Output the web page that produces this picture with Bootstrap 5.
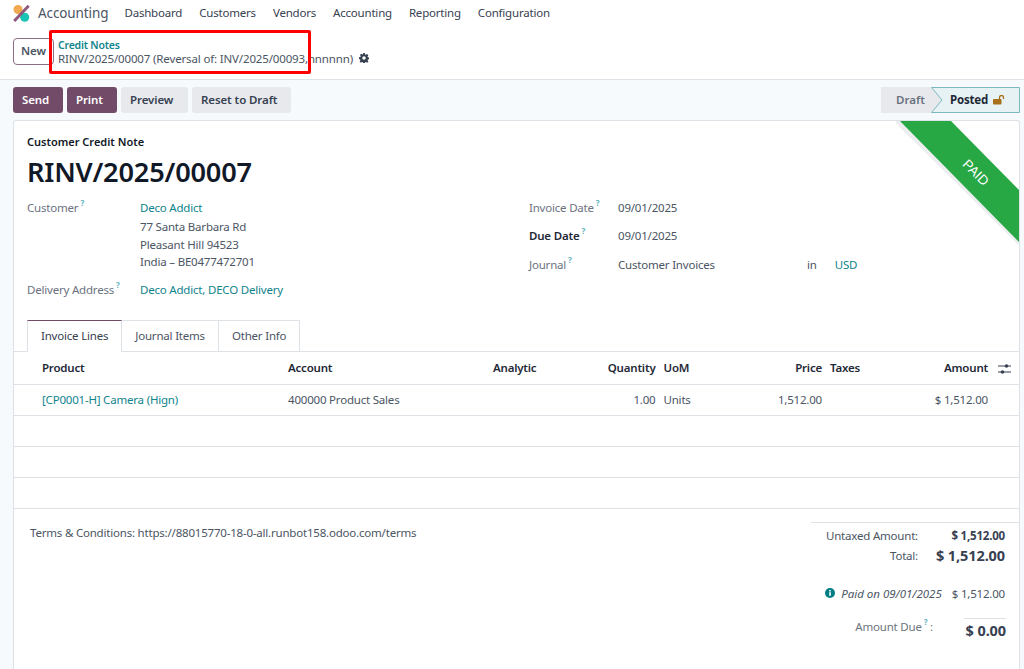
<!DOCTYPE html>
<html lang="en">
<head>
<meta charset="utf-8">
<title>Credit Note</title>
<link href="https://cdn.jsdelivr.net/npm/bootstrap@5.3.0/dist/css/bootstrap.min.css" rel="stylesheet">
<style>
html,body{height:669px;overflow:hidden}
body{font-family:"Noto Sans","Liberation Sans",sans-serif;font-size:11.5px;color:#4b5563;background:#fff;letter-spacing:-.2px}
.topbar{height:26px;padding-left:13px;color:#374151}
.topbar .brand{font-size:13.5px;margin:0 16px 0 8px;color:#4b5563;letter-spacing:-.1px}
.topbar .item{margin-right:17px;color:#374151}
.ctrl{height:54px;border-bottom:1px solid #dee2e6;padding-left:13px;position:relative}
.newbtn{height:27px;width:41px;border:1px solid #8d6f85;border-radius:4px;background:#fff;color:#4b5563;font-weight:600;font-size:11.5px;padding:0;margin-top:-3px}
.crumb{margin-left:4px;line-height:13px;margin-bottom:2px}
.teal{color:#11848c}
.crumb .teal{font-weight:600;font-size:10.5px}
.redbox{position:absolute;left:49px;top:4px;width:262px;height:44px;border:3px solid #f00;border-radius:2px;pointer-events:none}
.crumbline{font-size:11.5px;white-space:nowrap;letter-spacing:-.15px}
.gear{margin-left:6px}
.bar{height:40px;background:#f6fafc;padding:7px 4px 0 13px;gap:4px}
.act{height:26px;border:0;border-radius:3px;font-size:11.5px;font-weight:600;padding:0 0 0 9px;background:#e7e9ed;color:#374151;letter-spacing:-.1px;text-align:left}
.act.pri{background:#714b67;color:#fff}
.w50{width:50px}.w67{width:67px}.w99{width:99px}
.draft{height:26px;width:50px;background:#e7e9ed;color:#6b7280;font-weight:600;line-height:26px;padding-left:15px;letter-spacing:0}
.stage-wrap{position:relative;width:89px;height:26px;background:#e7e9ed}
.stage-wrap>svg{position:absolute;left:0;top:0}
.posted{position:relative;height:26px;line-height:26px;padding-left:19px;color:#1f2937;font-weight:700;gap:5px}
.pagebg{background:#f6fafc;padding:0 4px 0 13px;height:549px}
.sheet{position:relative;background:#fff;border:1px solid #dee2e6;border-bottom:0;border-radius:3px 3px 0 0;height:549px;overflow:hidden}
.ribbon{position:absolute;right:-1px;top:-1px;width:124px;height:124px}
.paidtxt{position:absolute;right:28px;top:42px;color:#fff;font-size:13.5px;transform:rotate(45deg);font-family:"Liberation Sans",sans-serif;letter-spacing:0}
.subt{font-weight:600;color:#111827;font-size:11px;padding:13px 0 0 13px;line-height:16px;letter-spacing:0}
.docname{font-size:27.2px;font-weight:600;color:#111827;line-height:34px;padding:5px 0 0 13px;letter-spacing:-.2px}
.cols{padding:10px 0 0 13px}
.lcol{width:502px}
.lbl{color:#6b7280;width:113px;flex:none}
.lbl.l2{width:89px}
.lbl.strong{color:#1f2937;font-weight:600}
sup.hlp{color:#5fb3c0;font-size:8px;font-weight:700;top:-.7em;margin-left:2px}
.frow{line-height:17.5px}
.firstline{margin-bottom:1.500px}
.gap10{margin-top:10px}
.gap12{margin-top:12px}
.jn{width:189px}
.usd{margin-left:18px}
.tabsrow{margin-top:22px;height:32px;border-bottom:1px solid #dee2e6;padding-left:13px}
.tabi{height:32px;line-height:30px;padding:0 13px;border:1px solid #dee2e6;border-left:0;border-bottom:0;color:#4b5563}
.tabi.on{background:#fff;height:32px;border-left:1px solid #dee2e6;border-top:1px solid #714b67;color:#374151;padding:0 13px}
table.lines{table-layout:fixed;width:1005px;margin:0;border-collapse:collapse;color:#4b5563;font-size:11.5px}
table.lines th,table.lines td{padding:0 4px;height:31px;vertical-align:middle;border-bottom:1px solid #dee2e6;background:transparent;color:inherit;white-space:nowrap}
table.lines td.teal{color:#11848c}
table.lines thead th{height:32px;color:#1f2937;font-weight:600;border-bottom-width:1px}
table.lines thead th.opt{padding-left:6px;padding-right:0}
.c0{width:24px}.c1{width:246px}.c2{width:205px}.c3{width:82px}.c4{width:88.500px}.c5{width:52px}.c6{width:114.500px}.c7{width:52px}.c8{width:114px}.c9{width:27px}
.foot{padding:13px 0 0 16px}
.terms{color:#4b5563;flex:1;padding-top:2px}
.totals{width:208px;border-top:1px solid #dee2e6;padding-right:14px;color:#4b5563}
.r1{padding-top:4px}
.r2{margin-top:1px}
.tk{flex:1;text-align:right}
.tv{text-align:right;font-weight:700;color:#374151;white-space:nowrap}
.vw{width:87px;flex:none}
.big{font-size:14.5px;letter-spacing:-.1px}
.paidrow{margin-top:18px;line-height:17px;white-space:nowrap}
.paidrow em{letter-spacing:0}
.gapv{margin:0 10px 0 6px}
.gapd{margin-right:31px}
.dueline{width:42px;border-top:1px solid #dee2e6;margin-right:-1px;padding-top:1px;line-height:20px}
</style>
</head>
<body>
<div class="topbar d-flex align-items-center">
  <svg width="17" height="17" viewBox="0 0 17 17" aria-hidden="true"><circle cx="5" cy="4.500" r="4.500" fill="#f0a94e"/><circle cx="11.700" cy="12.300" r="4.500" fill="#1ac4b4"/><path d="M1.200 16 15.700 .8" stroke="#8f5a7e" stroke-width="3"/></svg>
  <span class="brand">Accounting</span>
  <span class="item">Dashboard</span><span class="item">Customers</span><span class="item">Vendors</span><span class="item">Accounting</span><span class="item">Reporting</span><span class="item">Configuration</span>
</div>
<div class="ctrl d-flex align-items-center">
  <button class="newbtn" type="button">New</button>
  <div class="crumb">
    <div class="teal">Credit Notes</div>
    <div class="crumbline d-flex align-items-center">RINV/2025/00007 (Reversal of: INV/2025/00093,nnnnnn)
      <svg class="gear" width="10" height="10" viewBox="0 0 16 16" aria-hidden="true"><path fill="#374151" fill-rule="evenodd" d="M6.600 0h2.800l.4 2.200 1.300.6 1.900-1.300 2 2-1.300 1.900.6 1.300 2.200.4v2.800l-2.200.4-.6 1.300 1.300 1.900-2 2-1.900-1.300-1.300.6-.4 2.200H6.600l-.4-2.200-1.300-.6-1.900 1.300-2-2 1.300-1.900-.6-1.300L0 9.400V6.600l2.200-.4.6-1.300L1.500 3l2-2 1.900 1.300 1.300-.6zM8 5.200a2.800 2.800 0 1 0 0 5.600 2.800 2.800 0 0 0 0-5.600z"/></svg>
    </div>
  </div>
  <div class="redbox"></div>
</div>
<div class="bar d-flex">
  <button class="act pri w50" type="button">Send</button>
  <button class="act pri w50" type="button">Print</button>
  <button class="act w67" type="button">Preview</button>
  <button class="act w99" type="button">Reset to Draft</button>
  <div class="ms-auto d-flex">
    <div class="draft">Draft</div>
    <div class="stage-wrap">
      <svg width="89" height="26" viewBox="0 0 89 26" aria-hidden="true"><path d="M.5.500H88.500V25.500H.500L11 13z" fill="#e6f2f3" stroke="#7fb9c0"/></svg>
      <div class="posted d-flex align-items-center">Posted
        <svg width="12" height="10" viewBox="0 0 12 10" aria-hidden="true"><rect x="0" y="4" width="8.500" height="5.500" rx="1" fill="#a9701c"/><path d="M6.500 4V2.500a2 2 0 0 1 4 0V4" fill="none" stroke="#a9701c" stroke-width="1.300"/></svg>
      </div>
    </div>
  </div>
</div>
<div class="pagebg">
  <div class="sheet">
    <svg class="ribbon" viewBox="0 0 124 124" aria-hidden="true"><path d="M0 0 124 123" stroke="#eceef0" stroke-width="5" fill="none"/><path d="M3 0H54L124 71V123z" fill="#28a745"/></svg>
    <div class="paidtxt">PAID</div>
    <div class="subt">Customer Credit Note</div>
    <div class="docname">RINV/2025/00007</div>
    <div class="cols d-flex">
      <div class="lcol">
        <div class="d-flex frow">
          <div class="lbl">Customer<sup class="hlp">?</sup></div>
          <div><div class="teal firstline">Deco Addict</div><div>77 Santa Barbara Rd</div><div>Pleasant Hill 94523</div><div>India – BE0477472701</div></div>
        </div>
        <div class="d-flex frow gap10">
          <div class="lbl">Delivery Address<sup class="hlp">?</sup></div>
          <div class="teal">Deco Addict, DECO Delivery</div>
        </div>
      </div>
      <div>
        <div class="d-flex frow"><div class="lbl l2">Invoice Date<sup class="hlp">?</sup></div><div>09/01/2025</div></div>
        <div class="d-flex frow gap10"><div class="lbl l2 strong">Due Date<sup class="hlp">?</sup></div><div>09/01/2025</div></div>
        <div class="d-flex frow gap12"><div class="lbl l2">Journal<sup class="hlp">?</sup></div><div class="jn">Customer Invoices</div><div>in</div><div class="teal usd">USD</div></div>
      </div>
    </div>
    <div class="tabsrow d-flex">
      <div class="tabi on">Invoice Lines</div><div class="tabi">Journal Items</div><div class="tabi">Other Info</div>
    </div>
    <table class="table lines">
      <colgroup><col class="c0"><col class="c1"><col class="c2"><col class="c3"><col class="c4"><col class="c5"><col class="c6"><col class="c7"><col class="c8"><col class="c9"></colgroup>
      <thead><tr>
        <th></th><th>Product</th><th>Account</th><th>Analytic</th><th class="text-end">Quantity</th><th>UoM</th><th class="text-end">Price</th><th>Taxes</th><th class="text-end">Amount</th>
        <th class="opt"><svg width="13" height="10" viewBox="0 0 13 10" aria-hidden="true"><path d="M0 2h13M0 8h13" stroke="#374151" stroke-width="1"/><circle cx="8.500" cy="2" r="1.800" fill="#374151"/><circle cx="4.500" cy="8" r="1.800" fill="#374151"/></svg></th>
      </tr></thead>
      <tbody>
        <tr><td></td><td class="teal">[CP0001-H] Camera (Hign)</td><td>400000 Product Sales</td><td></td><td class="text-end">1.00</td><td>Units</td><td class="text-end">1,512.00</td><td></td><td class="text-end">$ 1,512.00</td><td></td></tr>
        <tr><td colspan="10"></td></tr>
        <tr><td colspan="10"></td></tr>
        <tr><td colspan="10"></td></tr>
      </tbody>
    </table>
    <div class="foot d-flex">
      <div class="terms">Terms &amp; Conditions: https://88015770-18-0-all.runbot158.odoo.com/terms</div>
      <div class="totals">
        <div class="d-flex align-items-center r1"><div class="tk">Untaxed Amount:</div><div class="tv vw">$ 1,512.00</div></div>
        <div class="d-flex align-items-center r2"><div class="tk">Total:</div><div class="tv vw big">$ 1,512.00</div></div>
        <div class="paidrow d-flex align-items-center justify-content-end">
          <svg width="10" height="10" viewBox="0 0 10 10" aria-hidden="true"><circle cx="5" cy="5" r="5" fill="#017e84"/><rect x="4.200" y="4.200" width="1.600" height="3.600" fill="#fff"/><rect x="4.200" y="2" width="1.600" height="1.500" fill="#fff"/></svg>
          <em class="gapv">Paid on 09/01/2025</em><span>$ 1,512.00</span>
        </div>
        <div class="d-flex justify-content-end mt-3">
          <div class="gapd text-secondary">Amount Due<sup class="hlp">?</sup> :</div>
          <div class="dueline tv big">$ 0.00</div>
        </div>
      </div>
    </div>
  </div>
</div>
</body>
</html>
